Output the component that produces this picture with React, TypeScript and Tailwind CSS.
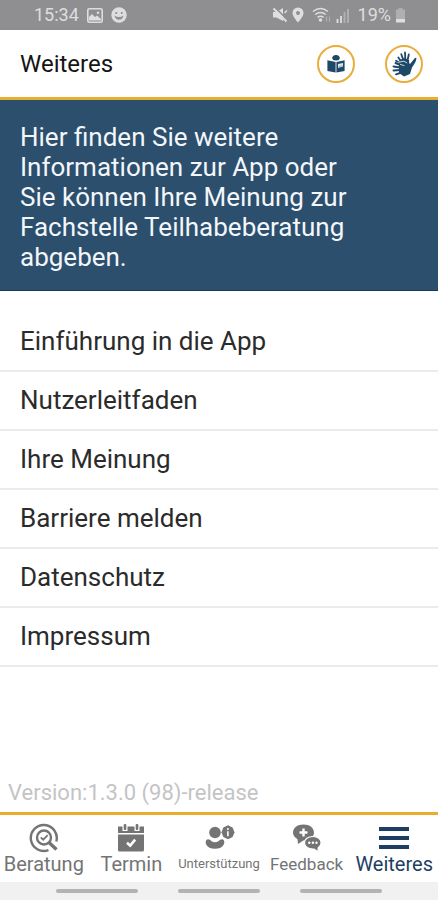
import React from "react";

const entries = [
    "Einführung in die App",
    "Nutzerleitfaden",
    "Ihre Meinung",
    "Barriere melden",
    "Datenschutz",
    "Impressum",
];

function StatusBar() {
    return (
        <div className="flex h-[30px] items-center justify-between bg-[#8f8f92] pl-[34px] pr-8 text-[#dededf]">
            <div className="flex items-center gap-2">
                <span className="text-lg leading-[30px]">15:34</span>
                <svg width="16" height="15" viewBox="0 0 16 15" aria-hidden="true">
                    <rect x="0.8" y="0.8" width="14.4" height="13.4" rx="1.5" fill="none" stroke="currentColor" strokeWidth="1.6" />
                    <path d="M2 12.5V9l3-3 3 3 2-1.5 4 3.5v1.500z" fill="currentColor" />
                    <circle cx="11" cy="4.8" r="1.3" fill="currentColor" />
                </svg>
                <svg width="16" height="16" viewBox="0 0 16 16" aria-hidden="true">
                    <circle cx="8" cy="8" r="7.7" fill="currentColor" />
                    <circle cx="5.2" cy="6" r="1.1" fill="#8f8f92" />
                    <circle cx="10.8" cy="6" r="1.1" fill="#8f8f92" />
                    <path d="M3.500 8.500q4.500 3 9 0-1 4.300-4.500 4.300t-4.500-4.300z" fill="#8f8f92" />
                </svg>
            </div>
            <div className="flex items-center gap-1">
                <svg width="16" height="16" viewBox="0 0 16 16" aria-hidden="true">
                    <path d="M1 5h3.500L11 1v13l-6.500-3.500H1z" fill="currentColor" />
                    <path d="M3 .5l13 13" stroke="#8f8f92" strokeWidth="1.6" />
                    <path d="M1.500 1.500l13 13" stroke="currentColor" strokeWidth="2" />
                    <path d="M12.500 6L15 3.500" stroke="currentColor" strokeWidth="1.500" />
                </svg>
                <svg width="12" height="16" viewBox="0 0 12 16" aria-hidden="true">
                    <path d="M6 .5A5.500 5.500 0 0 0 .5 6C.5 9.500 6 15.500 6 15.500s5.500-6 5.500-9.500A5.500 5.500 0 0 0 6 .5zm0 3.400a2 2 0 1 1 0 4 2 2 0 0 1 0-4z" fill="currentColor" />
                </svg>
                <svg className="ml-1" width="20" height="16" viewBox="0 0 20 16" fill="none" stroke="currentColor" strokeWidth="1.5" aria-hidden="true">
                    <path d="M1 4.500q7.500-6 15 0M3.200 7.500q5.300-4 10.600 0M5.500 10.300q3-2.200 6 0" />
                    <circle cx="8.5" cy="13" r="1" fill="currentColor" />
                    <path d="M14.500 9.500v5M17.500 9.500v5" strokeWidth="1.2" opacity=".4" />
                </svg>
                <svg width="14" height="15" viewBox="0 0 14 15" stroke="currentColor" strokeWidth="1.8" aria-hidden="true">
                    <path d="M1.500 15v-4M5 15V8" />
                    <path d="M8.500 15V4M12 15V1" opacity=".45" />
                </svg>
                <span className="ml-1 text-lg leading-[30px]">19%</span>
                <svg width="11" height="15" viewBox="0 0 11 15" fill="currentColor" aria-hidden="true">
                    <path d="M3.500 0h4v1.500H10V11H1V1.500h2.500z" opacity=".4" />
                    <path d="M1 11h9v3.500H1z" />
                </svg>
            </div>
        </div>
    );
}

function ReadIcon() {
    return (
        <svg width="20" height="20" viewBox="0 0 20 20" fill="#1d4868" aria-hidden="true">
            <path d="M10 1c2.500 0 3.800 1.400 3.800 3.100S12.300 6.600 10 6.600 6.200 5.800 6.200 4.100 7.500 1 10 1z" />
            <path d="M1.400 6.200 9.600 8v10.500l-8.200-1.400z" />
            <path d="M18.600 6.200 10.400 8v10.500l8.200-1.400z" />
            <path d="M12 10l5-1v3.500l-5 1.500z" fill="#dfe8ed" />
            <path d="M12.500 12.800l4-1.200" stroke="#8da5b5" strokeWidth=".8" />
        </svg>
    );
}

// two overlapping hands, the front one with its thumb to the upper right
function HandsIcon() {
    return (
        <svg className="shrink-0" width="28" height="28" viewBox="0 0 28 28" fill="none" stroke="#1d4868" strokeLinecap="round" aria-hidden="true">
            <path d="M9 10.500l5-2.500 5 2 .5 6-7 1z" fill="#1d4868" stroke="none" />
            <path d="M10.500 10.500L8.300 7.500M13 9L11.300 4.200M15.300 9L15 2.500M17.500 10.500L18.800 4.500M9.500 12.500L6 10.800" strokeWidth="1.8" />
            <path d="M9 13.500l5.500-1.500 3.500 2 2.500-.5 4.200-5.300q1.400-1.200 1.800.2-.3 2.600-3 6.800l-1.500 2.300-2 6.500-6 2.500-5-3.500z" fill="#1d4868" stroke="none" />
            <path d="M10.500 15L5.500 13M10 17.500L3.500 16.500M10.500 20L3.500 20.500M11.500 22.500L6 24.300" strokeWidth="1.9" />
            <path d="M8.500 12.200l5.300-1 3 1.600M10.500 14.500l3.500 1" stroke="#fff" strokeWidth=".8" />
        </svg>
    );
}

function AdviceIcon() {
    return (
        <svg width="30" height="30" viewBox="0 0 30 30" fill="none" stroke="currentColor" aria-hidden="true">
            <path d="M19.500 27.100A13 13 0 1 1 27.300 18.500" strokeWidth="2.4" />
            <circle cx="15" cy="14.5" r="7" strokeWidth="2.400" />
            <path d="M11.800 14.300l2.400 2.400 4.500-4.500" strokeWidth="1.8" />
            <path d="M20 19.500l7.500 7" strokeWidth="3.4" />
        </svg>
    );
}

function CalendarIcon() {
    return (
        <svg width="28" height="28" viewBox="0 0 28 28" fill="currentColor" aria-hidden="true">
            <path d="M1 2.500h26V9H1zM1 10.500h26V26q0 1.500-1.500 1.500h-23Q1 27.500 1 26z" />
            <path d="M5.500 2h5v5h-5zM17.500 2h5v5h-5z" fill="#fff" />
            <rect x="6.700" y="0" width="2.6" height="6" rx="1" />
            <rect x="18.700" y="0" width="2.6" height="6" rx="1" />
            <path d="M10 18.700l3.200 3 5-6" fill="none" stroke="#fff" strokeWidth="2.6" />
        </svg>
    );
}

function SupportIcon() {
    return (
        <svg width="32" height="26" viewBox="0 0 32 26" fill="currentColor" aria-hidden="true">
            <circle cx="12" cy="7.5" r="5.8" />
            <path d="M25 .3l4.600 2.200 1.900 4.700-1.900 4.800L25 14.200l-4.700-2.200-1.800-4.800 1.800-4.700z" />
            <path d="M24.900 6.200v5" stroke="#fff" strokeWidth="1.6" />
            <circle cx="24.900" cy="4" r="1" fill="#fff" />
            <path d="M5 14.200c1.700 0 2.200.8 3.300 1.700 2.200 1.700 5.200 1.700 7.400 0 1.100-.9 1.900-1.700 3.500-1.700 2 0 2.600 3 1.700 5-1.300 2.900-4.700 4.600-8.900 4.600s-7.600-1.700-8.900-4.600c-.9-2-.1-5 1.900-5z" />
        </svg>
    );
}

function FeedbackIcon() {
    return (
        <svg width="30" height="28" viewBox="0 0 30 28" fill="currentColor" aria-hidden="true">
            <path d="M11.500.5C5.200.5 1 4 1 8.600c0 2.800 1.700 5.200 4.500 6.600L6 20l5.300-3.500C17.500 16.500 22 13.200 22 8.600S17.800.5 11.500.5z" />
            <path d="M11.500 4.500v8M7.500 8.500h8" stroke="#fff" strokeWidth="2.4" />
            <path d="M20.800 12.500c-4.900 0-8.300 2.700-8.300 6.300s3.500 6.200 8.300 6.200h1.300l4 3v-4c1.900-1.200 3-3 3-5.200 0-3.600-3.400-6.300-8.300-6.300z" stroke="#fff" strokeWidth="1.2" />
            <circle cx="17.3" cy="18.8" r="1.2" fill="#fff" />
            <circle cx="20.9" cy="18.8" r="1.2" fill="#fff" />
            <circle cx="24.5" cy="18.8" r="1.2" fill="#fff" />
        </svg>
    );
}

function MenuIcon() {
    return (
        <svg width="30" height="24" viewBox="0 0 30 24" fill="currentColor" aria-hidden="true">
            <path d="M0 1h30v4H0zM0 10h30v4H0zM0 19h30v4H0z" />
        </svg>
    );
}

const tabs = [
    { label: "Beratung", icon: <AdviceIcon />, size: "text-xl" },
    { label: "Termin", icon: <CalendarIcon />, size: "text-xl" },
    { label: "Unterstützung", icon: <SupportIcon />, size: "text-[13px]" },
    { label: "Feedback", icon: <FeedbackIcon />, size: "text-[17px]" },
    { label: "Weiteres", icon: <MenuIcon />, size: "text-xl" },
];

export default function App() {
    const [active, setActive] = React.useState("Weiteres");

    return (
        <div className="flex min-h-screen flex-col bg-white font-[Roboto,sans-serif]">
            <StatusBar />
            <header className="flex h-[70px] items-center justify-between border-b-[3px] border-[#e9ad2f] pl-5 pr-[15px]">
                <h1 className="text-2xl text-[#151515]">Weiteres</h1>
                <div className="flex gap-[30px]">
                    <button aria-label="Leichte Sprache" className="flex size-[38px] items-center justify-center rounded-full border-2 border-[#e9ad3c]">
                        <ReadIcon />
                    </button>
                    <button aria-label="Gebärdensprache" className="flex size-[38px] items-center justify-center rounded-full border-2 border-[#e9ad3c]">
                        <HandsIcon />
                    </button>
                </div>
            </header>

            <main className="flex flex-1 flex-col">
                <p className="border-b border-[#17395a] bg-[#2b4f6c] pb-[18px] pl-5 pr-16 pt-[22px] text-[26px] leading-[30px] text-[#f3f6fa]">
                    Hier finden Sie weitere Informationen zur App oder<br />
                    Sie können Ihre Meinung zur Fachstelle Teilhabeberatung abgeben.
                </p>
                <ul className="pt-[22px]">
                    {entries.map((entry) => (
                        <li key={entry}>
                            <a href="#" className="flex h-[59px] items-center border-b-2 border-[#ebebeb] pl-5 text-[26px] text-[#2b2b2b]">
                                {entry}
                            </a>
                        </li>
                    ))}
                </ul>
                <p className="mt-auto px-2 pb-1 text-[22px] leading-[30px] text-[#c4c4c4]">Version:1.3.0 (98)-release</p>
            </main>

            <nav className="grid grid-cols-5 border-t-[3px] border-[#e9ad2f]">
                {tabs.map((tab) => (
                    <button
                        key={tab.label}
                        aria-current={active === tab.label ? "page" : undefined}
                        onClick={() => setActive(tab.label)}
                        className={`flex h-[67px] min-w-0 flex-col items-center pt-[7px] ${active === tab.label ? "text-[#1d3f63]" : "text-[#747474]"}`}
                    >
                        <span className="flex h-8 items-center">{tab.icon}</span>
                        <span className={`${tab.size} whitespace-nowrap leading-5`}>{tab.label}</span>
                    </button>
                ))}
            </nav>
            <div className="flex h-[18px] items-center justify-center gap-10 bg-[#f1f1f1]">
                <span className="h-1 w-[82px] rounded-full bg-[#b3b3b3]" />
                <span className="h-1 w-[82px] rounded-full bg-[#b3b3b3]" />
                <span className="h-1 w-[82px] rounded-full bg-[#b3b3b3]" />
            </div>
        </div>
    );
}
